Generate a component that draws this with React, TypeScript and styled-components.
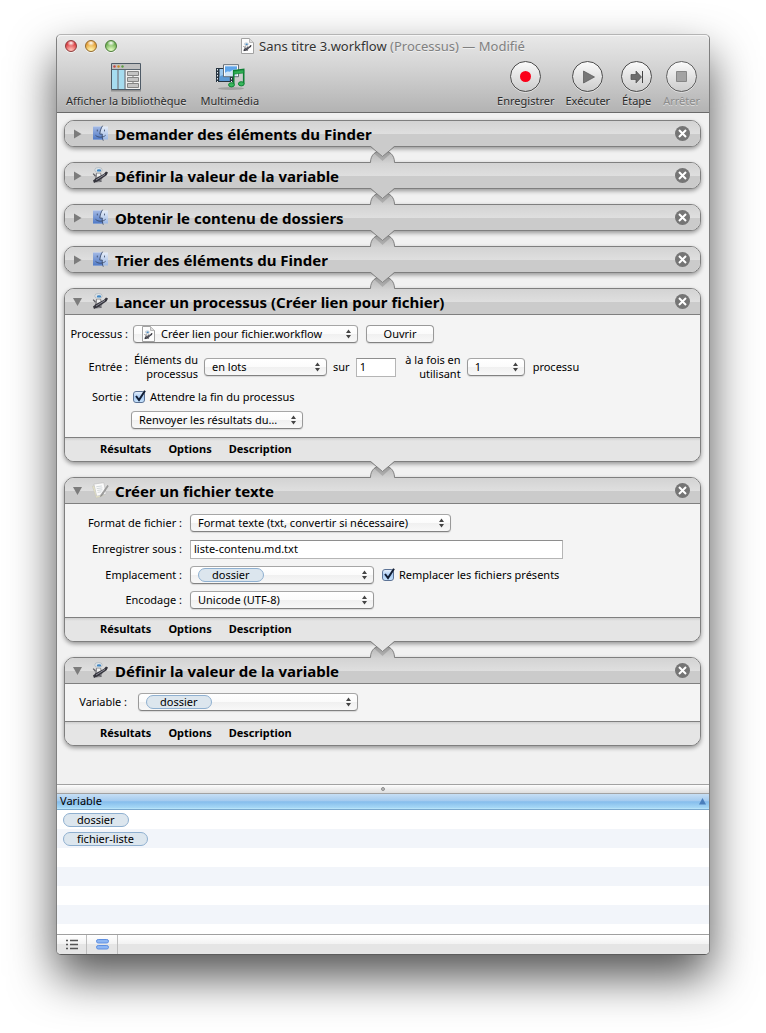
import React, { useId, useState } from "react";
import styled, { createGlobalStyle, css } from "styled-components";

const GlobalStyle = createGlobalStyle`
  * { box-sizing: border-box; }
  body {
    margin: 0;
    background: #fff;
    color: #000;
    font-family: "Noto Sans", "Open Sans", sans-serif;
    font-size: 11px;
    line-height: 14px;
  }
  button, input, select { font: inherit; color: inherit; margin: 0; }
`;

/* ---------- window ---------- */

const Window = styled.main`
  margin: 34px 56px 78px;
  border: 1px solid #808080;
  border-top-color: #b4b4b4;
  border-bottom-color: #5c5c5c;
  border-radius: 5px;
  background: #f1f1f1;
  box-shadow: 0 22px 46px rgba(0, 0, 0, 0.68);
`;

const Header = styled.header`
  border-bottom: 1px solid #6a6a6a;
  border-radius: 5px 5px 0 0;
  background: linear-gradient(#e9e9e9, #d2d2d2 45%, #b3b3b3);
  box-shadow: inset 0 1px #f6f6f6;
  text-shadow: 0 1px rgba(255, 255, 255, 0.5);
`;

const TitleBar = styled.div`
  display: grid;
  grid-template-columns: 1fr auto 1fr;
  align-items: center;
  height: 22px;
  padding: 0 8px;
`;

const Lights = styled.div`
  display: flex;
  gap: 8px;
`;

const Light = styled.button<{ $tone: string; $glow: string; $rim: string }>`
  width: 12px;
  height: 12px;
  padding: 0;
  border: 1px solid ${(p) => p.$rim};
  border-radius: 50%;
  background: radial-gradient(ellipse 4px 3px at 50% 20%, #fff, transparent),
    radial-gradient(circle at 50% 95%, ${(p) => p.$glow} 10%, ${(p) => p.$tone} 75%);
  box-shadow: 0 1px rgba(255, 255, 255, 0.6);
`;

const Title = styled.h1`
  display: flex;
  align-items: center;
  gap: 5px;
  margin: 0;
  font-size: 13px;
  font-weight: 400;
  line-height: 18px;
  color: #333;
  white-space: nowrap;
`;

const TitleNote = styled.span`
  color: #808080;
`;

const Toolbar = styled.div`
  display: flex;
  justify-content: space-between;
  padding: 4px 9px 5px;
`;

const ToolGroup = styled.div<{ $gap: number }>`
  display: flex;
  gap: ${(p) => p.$gap}px;
`;

const Tool = styled.button`
  display: flex;
  flex-direction: column;
  align-items: center;
  gap: 1px;
  padding: 0;
  border: 0;
  background: none;
  color: #2b2b2b;
  text-shadow: inherit;
  line-height: 13px;
  &:disabled { color: #8c8c8c; }
`;

const ToolIcon = styled.span`
  display: flex;
  align-items: center;
  justify-content: center;
  height: 32px;
`;

/* ---------- workflow ---------- */

const Workflow = styled.section`
  padding: 7px 8px 38px 7px;
`;

const Card = styled.article`
  border: 1px solid #7f7f7f;
  border-radius: 10px;
  background: #f4f4f4;
  box-shadow: 0 2px 4px rgba(0, 0, 0, 0.38);
`;

const CardHeader = styled.div<{ $open: boolean }>`
  display: flex;
  align-items: center;
  height: 25px;
  padding: 0 10px 0 8px;
  border-radius: 9px;
  background: linear-gradient(#d3d3d3, #dfdfdf 13px, #cbcbcb 13px, #cbcbcb);
  ${(p) =>
    p.$open &&
    css`
      height: 26px;
      border-bottom: 1px solid #7f7f7f;
      border-radius: 9px 9px 0 0;
    `}
`;

const PlainButton = styled.button`
  display: flex;
  padding: 0;
  border: 0;
  background: none;
`;

const CardIcon = styled.span`
  display: flex;
  margin: 0 6px 0 9px;
`;

const CardTitle = styled.h2`
  flex: 1;
  margin: 0;
  font-size: 15px;
  font-weight: 700;
  line-height: 20px;
`;

const CardBody = styled.div<{ $label: number; $foot: number }>`
  --label: ${(p) => p.$label}px;
  padding: 6px 4px ${(p) => p.$foot}px 0;
`;

const Row = styled.div<{ $h: number }>`
  display: flex;
  align-items: center;
  min-height: ${(p) => p.$h}px;
`;

const Label = styled.label`
  flex: none;
  width: var(--label);
  text-align: right;
  white-space: nowrap;
`;

const Fields = styled.div<{ $indent?: number }>`
  display: flex;
  align-items: center;
  margin-left: ${(p) => p.$indent ?? 8}px;
`;

const SideLabel = styled.label`
  width: 65px;
  margin-right: 6px;
  text-align: right;
`;

const Word = styled.span`
  margin: 0 6px;
`;

const Tail = styled.span`
  margin-left: 8px;
`;

const CardFooter = styled.nav`
  display: flex;
  gap: 17px;
  height: 24px;
  padding: 0 0 2px 35px;
  border-top: 1px solid #7f7f7f;
  border-radius: 0 0 9px 9px;
  background: linear-gradient(#cfcfcf, #e5e5e5 3px);
`;

const FooterButton = styled.button`
  padding: 0;
  border: 0;
  background: none;
  font-weight: 700;
`;

const Link = styled.svg`
  position: relative;
  z-index: 1;
  display: block;
  margin: -1px auto;
`;

/* ---------- controls ---------- */

const SelectBox = styled.span<{ $w: number }>`
  position: relative;
  display: inline-flex;
  flex: none;
  width: ${(p) => p.$w}px;
  height: 18px;
  border: 1px solid #999;
  border-top-color: #a6a6a6;
  border-bottom-color: #828282;
  border-radius: 4px;
  background: linear-gradient(#fff, #fbfbfb 50%, #f0f0f0 50%, #f8f8f8);
  box-shadow: 0 1px 1px rgba(0, 0, 0, 0.12);
`;

const NativeSelect = styled.select<{ $pad: number }>`
  position: relative;
  width: 100%;
  height: 16px;
  padding: 0 16px 0 ${(p) => p.$pad}px;
  border: 0;
  background: none;
  appearance: none;
  line-height: 16px;
  white-space: nowrap;
`;

const Arrows = styled.svg`
  position: absolute;
  top: 3px;
  right: 6px;
  pointer-events: none;
`;

const SelectIcon = styled.span`
  position: absolute;
  top: 0;
  left: 8px;
  display: flex;
`;

const pill = css`
  border: 1px solid #8fb0d0;
  border-radius: 7px;
  background: #dce6ee;
`;

const PillBack = styled.span`
  ${pill}
  position: absolute;
  top: 1px;
  left: 7px;
  width: 66px;
  height: 14px;
`;

const Pill = styled.span`
  ${pill}
  display: inline-block;
  height: 14px;
  padding: 0 13px;
  line-height: 12px;
`;

const PushButton = styled.button`
  width: 68px;
  height: 18px;
  margin-left: 8px;
  padding: 0;
  border: 1px solid #999;
  border-bottom-color: #828282;
  border-radius: 4px;
  background: linear-gradient(#fff, #fbfbfb 50%, #f0f0f0 50%, #f8f8f8);
  box-shadow: 0 1px 1px rgba(0, 0, 0, 0.12);
  line-height: 16px;
`;

const TextInput = styled.input<{ $w: number }>`
  width: ${(p) => p.$w}px;
  height: 19px;
  padding: 0 3px 2px;
  border: 1px solid #b5b5b5;
  border-top-color: #8e8e8e;
  border-radius: 0;
  background: #fff;
`;

const CheckLabel = styled.label`
  display: flex;
  align-items: center;
  gap: 4px;
  white-space: nowrap;
`;

const CheckWrap = styled.span`
  position: relative;
  display: flex;
  width: 13px;
  height: 14px;
`;

const CheckInput = styled.input`
  width: 12px;
  height: 12px;
  margin-top: 1px;
  border: 1px solid #5c7396;
  border-radius: 3px;
  appearance: none;
  background: linear-gradient(#e4eefb, #a9cbf3 50%, #c6e2fc);
`;

const CheckMark = styled.svg`
  position: absolute;
  top: 0;
  left: 0;
  pointer-events: none;
`;

/* ---------- variables panel ---------- */

const Splitter = styled.div`
  display: flex;
  align-items: center;
  justify-content: center;
  height: 10px;
  border: solid #a2a2a2;
  border-width: 1px 0;
  background: linear-gradient(#fdfdfd, #dedede);
`;

const Dimple = styled.span`
  width: 4px;
  height: 4px;
  border: 1px solid #8e8e8e;
  border-radius: 50%;
  background: #bdbdbd;
`;

const VariableList = styled.section`
  min-height: 140px;
  background: repeating-linear-gradient(#fff 0 19px, #f2f5fa 19px 38px) 0 16px;
`;

const VariableTable = styled.table`
  width: 100%;
  border-collapse: separate;
  border-spacing: 0;
`;

const HeadCell = styled.th`
  height: 16px;
  padding: 0 3px 1px;
  border-bottom: 1px solid #7ba9cd;
  background: linear-gradient(#c6def4, #a4cbef 45%, #86bdec 52%, #a6d8f6 92%, #c2eafb);
  font-weight: 400;
  line-height: 14px;
  text-align: left;
`;

const HeadInner = styled.div`
  display: flex;
  align-items: center;
  justify-content: space-between;
`;

const Cell = styled.td`
  height: 19px;
  padding: 0 6px;
  line-height: 0;
  vertical-align: middle;
`;

const BottomBar = styled.footer`
  display: flex;
  height: 20px;
  border-top: 1px solid #a0a0a0;
  border-radius: 0 0 4px 4px;
  background: linear-gradient(#fff, #f2f2f2 50%, #e5e5e5 50%);
`;

const ModeButton = styled.button<{ $w: number }>`
  display: flex;
  align-items: center;
  justify-content: center;
  width: ${(p) => p.$w}px;
  padding: 0;
  border: 0;
  border-right: 1px solid #bdbdbd;
  background: none;
`;

/* ---------- drawings ---------- */

const RobotShape = () => (
  <>
    <ellipse cx="6.5" cy="3" rx="3.8" ry="2.5" fill="#dfe4e8" stroke="#a9b1b8" strokeWidth=".7" />
    <ellipse cx="7" cy="3.4" rx="2.2" ry="1.2" fill="#3f86c4" />
    <path d="M4 6h5l1.5 5L9 15l-5 .5L3 10z" fill="#8b8b8f" />
    <path d="M5 6.6h3.2L8.6 9 5 10z" fill="#f0f0f0" />
    <path d="M1.2 6.6l2.2 2.600M3 11.5l6.5 3" stroke="#5c5c62" strokeWidth="1.3" fill="none" />
    <path d="M1 13.6l2.6-2.2L12 6.8l2-2.200 2 1-1.400 2.600-9.200 6.400L2 16z" fill="#34343c" />
    <path d="M4 13l9-5.600" stroke="#a3a3b0" strokeWidth=".8" />
  </>
);

const RobotIcon = () => (
  <svg width="17" height="17" viewBox="0 0 17 17" aria-hidden="true">
    <RobotShape />
  </svg>
);

const FinderIcon = () => {
  const id = useId();
  return (
    <svg width="17" height="17" viewBox="0 0 17 17" aria-hidden="true">
      <defs>
        <linearGradient id={id} x2="0" y2="1">
          <stop offset="0" stopColor="#a3b9e4" />
          <stop offset="1" stopColor="#4f79c6" />
        </linearGradient>
        <linearGradient id={id + "r"} x2="0" y2="1">
          <stop offset="0" stopColor="#e6edf8" />
          <stop offset="1" stopColor="#9db9e6" />
        </linearGradient>
      </defs>
      <path d="M1 1.500h15v13H1z" fill={`url(#${id}r)`} />
      <path d="M1 1.500h9.400C8.800 4 8.200 6.400 8 9h2.400c-.2 2 0 3.800.5 5.500H1z" fill={`url(#${id})`} />
      <path d="M10.600.7C8.800 3.500 8 6.200 7.800 9.100h2.500c-.2 2.400.1 4.800 1 6.600" fill="none" stroke="#33425f" strokeWidth=".8" />
      <path d="M3.500 10.300c2.600 2.600 7.600 2.500 10.200-.1" fill="none" stroke="#33425f" strokeWidth=".8" />
      <path d="M5.300 4.600v1.800M12.500 4.600v1.800" stroke="#33425f" strokeWidth=".8" />
    </svg>
  );
};

const TextPadIcon = () => (
  <svg width="17" height="17" viewBox="0 0 18 18" aria-hidden="true">
    <path d="M.5 4.500L9 3l4 11-8.500 3z" fill="#ece8c4" stroke="#c7c7c0" strokeWidth=".7" />
    <path d="M2 2.200l10.500-1.500L15 12.500 5 15z" fill="#fafafa" stroke="#bdbdbd" strokeWidth=".7" />
    <path d="M4.500 5l6-.8M5 7l6-.8M5.500 9l5.500-.8M6 11l4-.6" stroke="#c6ccd0" strokeWidth=".8" />
    <path d="M16.500 3.500l.8.8L11 14l-2 1.400.6-2.200z" fill="#a2a2a2" stroke="#7b7b7b" strokeWidth=".5" />
  </svg>
);

const WorkflowDocIcon = () => (
  <svg width="13" height="16" viewBox="0 0 13 16" aria-hidden="true">
    <path d="M.5.5h8l4 4v11H.5z" fill="#fcfcfc" stroke="#a2a2a2" />
    <path d="M8.500.5v4h4" fill="#ddd" stroke="#a8a8a8" strokeWidth=".8" />
    <g transform="translate(1.800 4.400) scale(.55)">
      <RobotShape />
    </g>
  </svg>
);

const LibraryIcon = () => (
  <svg width="30" height="29" viewBox="0 0 30 29" aria-hidden="true">
    <path d="M0 27.500h30" stroke="#000" strokeOpacity=".25" strokeWidth="2" />
    <path d="M.5.5h29v26H.5z" fill="#f1f1f1" stroke="#4e5a66" />
    <path d="M1 1h28v5H1z" fill="#c0c0c0" />
    <circle cx="3.500" cy="3.500" r="1.200" fill="#c8453f" />
    <circle cx="7.500" cy="3.500" r="1.200" fill="#c98c26" />
    <circle cx="11.500" cy="3.500" r="1.200" fill="#5d9e43" />
    <path d="M1 6.500h28" stroke="#5b6670" />
    <path d="M1 7h5.500v19H1zM7.500 7h6v19h-6z" fill="#a6dcf0" />
    <path d="M7 7v19M14 7v19" stroke="#44586a" />
    <path d="M22 8v17" stroke="#777" />
    <g fill="#c4c4c4" stroke="#858585">
      <path d="M16.500 8.500h11v4h-11zM16.500 14.500h11v4h-11zM16.500 20.500h11v4h-11z" />
    </g>
  </svg>
);

const MediaIcon = () => (
  <svg width="30" height="27" viewBox="0 0 30 27" aria-hidden="true">
    <ellipse cx="16" cy="24.500" rx="13" ry="1.500" fill="#000" opacity=".18" />
    <path d="M1 4h17v14H1z" fill="#26333f" />
    <path d="M4.500 5h10v12h-10z" fill="#9cc8ee" />
    <path d="M4.500 13c3-3 6-1 10-2v6h-10z" fill="#5b9ad6" />
    <path d="M2.500 5v13M16.500 5v13" stroke="#e8eef2" strokeWidth="1" strokeDasharray="1.500 1.500" />
    <path d="M8.500.7h15v12h-15z" fill="#fff" stroke="#56616b" strokeWidth=".9" />
    <path d="M10 2.300h12v9H10z" fill="#5fa5ea" />
    <path d="M10 9c3-3 4 0 6-2s4-1 6-2v6.300H10z" fill="#cfe5f8" />
    <path d="M18.700 20.500V6.700l10-1.200v14" fill="none" stroke="#0e7f33" strokeWidth="1.600" />
    <path d="M18.700 7.200l10-1.200v3l-10 1.200z" fill="#2fae52" stroke="#0e7f33" strokeWidth=".6" />
    <ellipse cx="16.500" cy="20.800" rx="2.900" ry="2.100" fill="#38b85c" stroke="#0e7f33" />
    <ellipse cx="26.300" cy="19.800" rx="2.900" ry="2.100" fill="#38b85c" stroke="#0e7f33" />
  </svg>
);

const RoundIcon = ({ faded, children }: { faded?: boolean; children: React.ReactNode }) => {
  const id = useId();
  return (
    <svg width="31" height="32" viewBox="0 0 31 32" aria-hidden="true">
      <defs>
        <linearGradient id={id} x2="0" y2="1">
          <stop offset="0" stopColor="#fbfbfb" />
          <stop offset=".5" stopColor="#e3e3e3" />
          <stop offset="1" stopColor="#cccccc" />
        </linearGradient>
      </defs>
      <circle cx="15.500" cy="16.500" r="15" fill="none" stroke="#fff" strokeOpacity=".5" />
      <circle cx="15.500" cy="15.500" r="15" fill={`url(#${id})`} stroke={faded ? "#5e5e5e" : "#4a4a4a"} />
      {children}
    </svg>
  );
};

const RemoveIcon = () => (
  <svg width="15" height="15" viewBox="0 0 15 15" aria-hidden="true">
    <circle cx="7.500" cy="7.500" r="7.500" fill="#757575" />
    <path d="M4 4l7 7M11 4l-7 7" stroke="#fff" strokeWidth="2" />
  </svg>
);

const Disclosure = ({ open }: { open: boolean }) => (
  <svg width="10" height="11" viewBox="0 0 10 11" aria-hidden="true">
    <path d={open ? "M0 2h9L4.500 10z" : "M1 1.500l7.500 4.500L1 10.500z"} fill="#7c7c7c" />
  </svg>
);

const Connector = ({ tip }: { tip: string }) => {
  const id = useId();
  return (
    <Link width="27" height="17" viewBox="0 0 27 17" aria-hidden="true">
      <defs>
        <linearGradient id={id} x2="0" y2="1">
          <stop offset="0" stopColor="#b2b2b2" />
          <stop offset="1" stopColor="#d2d2d2" />
        </linearGradient>
        <clipPath id={id + "c"}>
          <path d="M1.500 17C1.500 8.500 7 4.500 13.500 4.500S25.500 8.500 25.500 17z" />
        </clipPath>
      </defs>
      <path d="M1.500 17C1.500 8.500 7 4.500 13.500 4.500S25.500 8.500 25.500 17z" fill={`url(#${id})`} />
      <path d="M1.500 16.500C1.500 8.500 7 4.500 13.500 4.500S25.500 8.500 25.500 16.500" fill="none" stroke="#7f7f7f" />
      <g clipPath={`url(#${id}c)`}>
        <path d="M2 2.500L13.500 13 25 2.500" fill="none" stroke="#000" strokeOpacity=".14" strokeWidth="3" />
      </g>
      <path d="M1.500 0L13.500 10.500 25.500 0z" fill={tip} />
      <path d="M1.500.5l12 10 12-10" fill="none" stroke="#7f7f7f" />
    </Link>
  );
};

/* ---------- pieces ---------- */

type SelectProps = {
  id: string;
  width: number;
  value: string;
  label?: string;
  icon?: boolean;
  token?: boolean;
};

const Select = ({ id, width, value, label, icon, token }: SelectProps) => (
  <SelectBox $w={width}>
    {token && <PillBack />}
    {icon && (
      <SelectIcon>
        <WorkflowDocIcon />
      </SelectIcon>
    )}
    <NativeSelect id={id} aria-label={label} $pad={icon ? 27 : token ? 21 : 7}>
      <option>{value}</option>
    </NativeSelect>
    <Arrows width="5" height="10" viewBox="0 0 5 10" aria-hidden="true">
      <path d="M0 4L2.500.5 5 4zM0 6h5L2.500 9.500z" fill="#444" />
    </Arrows>
  </SelectBox>
);

const Check = ({ children }: { children: string }) => {
  const [on, setOn] = useState(true);
  return (
    <CheckLabel>
      <CheckWrap>
        <CheckInput type="checkbox" checked={on} onChange={() => setOn(!on)} />
        {on && (
          <CheckMark width="13" height="13" viewBox="0 0 13 13" aria-hidden="true">
            <path d="M3 6l3 4L12 .8" fill="none" stroke="#111d33" strokeWidth="2" />
          </CheckMark>
        )}
      </CheckWrap>
      {children}
    </CheckLabel>
  );
};

type ActionProps = {
  title: string;
  icon: React.ReactNode;
  labelWidth?: number;
  foot?: number;
  children?: React.ReactNode;
};

const Action = ({ title, icon, labelWidth = 0, foot = 5, children }: ActionProps) => {
  const open = Boolean(children);
  return (
    <Card>
      <CardHeader $open={open}>
        <PlainButton aria-label="Afficher les détails" aria-expanded={open}>
          <Disclosure open={open} />
        </PlainButton>
        <CardIcon>{icon}</CardIcon>
        <CardTitle>{title}</CardTitle>
        <PlainButton aria-label="Supprimer">
          <RemoveIcon />
        </PlainButton>
      </CardHeader>
      {open && (
        <>
          <CardBody $label={labelWidth} $foot={foot}>{children}</CardBody>
          <CardFooter>
            <FooterButton>Résultats</FooterButton>
            <FooterButton>Options</FooterButton>
            <FooterButton>Description</FooterButton>
          </CardFooter>
        </>
      )}
    </Card>
  );
};

const CLOSED = "#cbcbcb";
const OPEN = "#e5e5e5";

export default function App() {
  return (
    <>
      <GlobalStyle />
      <Window>
        <Header>
          <TitleBar>
            <Lights>
              <Light aria-label="Fermer" $tone="#d8343a" $glow="#ffb8b0" $rim="#8e3b3b" />
              <Light aria-label="Réduire" $tone="#e39a2f" $glow="#fff0a6" $rim="#93692c" />
              <Light aria-label="Agrandir" $tone="#67ab4b" $glow="#dcf8bc" $rim="#4c7c3a" />
            </Lights>
            <Title>
              <WorkflowDocIcon />
              <span>
                Sans titre 3.workflow <TitleNote>(Processus) — Modifié</TitleNote>
              </span>
            </Title>
          </TitleBar>
          <Toolbar>
            <ToolGroup $gap={14}>
              <Tool>
                <ToolIcon><LibraryIcon /></ToolIcon>
                Afficher la bibliothèque
              </Tool>
              <Tool>
                <ToolIcon><MediaIcon /></ToolIcon>
                Multimédia
              </Tool>
            </ToolGroup>
            <ToolGroup $gap={11}>
              <Tool>
                <ToolIcon>
                  <RoundIcon><circle cx="15.500" cy="15.500" r="5.500" fill="#fb0019" /></RoundIcon>
                </ToolIcon>
                Enregistrer
              </Tool>
              <Tool>
                <ToolIcon>
                  <RoundIcon><path d="M11.500 10l11 6-11 6z" fill="#777" stroke="#555" strokeWidth=".7" /></RoundIcon>
                </ToolIcon>
                Exécuter
              </Tool>
              <Tool>
                <ToolIcon>
                  <RoundIcon>
                    <path d="M10 13.500h5v-3.500l5.500 6-5.500 6v-3.500h-5z" fill="#6d6d6d" stroke="#4f4f4f" strokeWidth=".7" />
                    <path d="M21.500 10v12" stroke="#444" />
                  </RoundIcon>
                </ToolIcon>
                Étape
              </Tool>
              <Tool disabled>
                <ToolIcon>
                  <RoundIcon faded>
                    <path d="M10.500 10.500h10v10h-10z" fill="#a3a3a3" stroke="#868686" />
                  </RoundIcon>
                </ToolIcon>
                Arrêter
              </Tool>
            </ToolGroup>
          </Toolbar>
        </Header>

        <Workflow>
          <Action title="Demander des éléments du Finder" icon={<FinderIcon />} />
          <Connector tip={CLOSED} />
          <Action title="Définir la valeur de la variable" icon={<RobotIcon />} />
          <Connector tip={CLOSED} />
          <Action title="Obtenir le contenu de dossiers" icon={<FinderIcon />} />
          <Connector tip={CLOSED} />
          <Action title="Trier des éléments du Finder" icon={<FinderIcon />} />
          <Connector tip={CLOSED} />
          <Action title="Lancer un processus (Créer lien pour fichier)" icon={<RobotIcon />} labelWidth={63}>
            <Row $h={26}>
              <Label htmlFor="process">Processus :</Label>
              <Fields $indent={5}>
                <Select id="process" width={225} value="Créer lien pour fichier.workflow" icon />
                <PushButton>Ouvrir</PushButton>
              </Fields>
            </Row>
            <Row $h={40}>
              <Label as="span">Entrée :</Label>
              <Fields $indent={5}>
                <SideLabel htmlFor="batch">Éléments du processus</SideLabel>
                <Select id="batch" width={123} value="en lots" />
                <Word>sur</Word>
                <TextInput aria-label="Nombre d'éléments" defaultValue="1" $w={40} />
                <SideLabel htmlFor="parallel">à la fois en utilisant</SideLabel>
                <Select id="parallel" width={58} value="1" />
                <Tail>processu</Tail>
              </Fields>
            </Row>
            <Row $h={20}>
              <Label as="span">Sortie :</Label>
              <Fields $indent={5}>
                <Check>Attendre la fin du processus</Check>
              </Fields>
            </Row>
            <Row $h={25}>
              <Label as="span" />
              <Fields $indent={3}>
                <Select id="results" label="Résultats du processus" width={172} value="Renvoyer les résultats du…" />
              </Fields>
            </Row>
          </Action>
          <Connector tip={OPEN} />
          <Action title="Créer un fichier texte" icon={<TextPadIcon />} labelWidth={117}>
            <Row $h={26}>
              <Label htmlFor="format">Format de fichier :</Label>
              <Fields>
                <Select id="format" width={261} value="Format texte (txt, convertir si nécessaire)" />
              </Fields>
            </Row>
            <Row $h={26}>
              <Label htmlFor="saveas">Enregistrer sous :</Label>
              <Fields>
                <TextInput id="saveas" defaultValue="liste-contenu.md.txt" $w={373} />
              </Fields>
            </Row>
            <Row $h={26}>
              <Label htmlFor="place">Emplacement :</Label>
              <Fields>
                <Select id="place" width={184} value="dossier" token />
                <Tail>
                  <Check>Remplacer les fichiers présents</Check>
                </Tail>
              </Fields>
            </Row>
            <Row $h={24}>
              <Label htmlFor="encoding">Encodage :</Label>
              <Fields>
                <Select id="encoding" width={184} value="Unicode (UTF-8)" />
              </Fields>
            </Row>
          </Action>
          <Connector tip={OPEN} />
          <Action title="Définir la valeur de la variable" icon={<RobotIcon />} labelWidth={62} foot={7}>
            <Row $h={24}>
              <Label htmlFor="variable">Variable :</Label>
              <Fields $indent={11}>
                <Select id="variable" width={220} value="dossier" token />
              </Fields>
            </Row>
          </Action>
        </Workflow>

        <Splitter>
          <Dimple />
        </Splitter>
        <VariableList>
          <VariableTable>
            <thead>
              <tr>
                <HeadCell scope="col">
                  <HeadInner>
                    Variable
                    <svg width="7" height="7" viewBox="0 0 7 7" aria-hidden="true">
                      <path d="M0 6.500L3.500 0 7 6.500z" fill="#4a7ebb" />
                    </svg>
                  </HeadInner>
                </HeadCell>
              </tr>
            </thead>
            <tbody>
              <tr>
                <Cell><Pill>dossier</Pill></Cell>
              </tr>
              <tr>
                <Cell><Pill>fichier-liste</Pill></Cell>
              </tr>
            </tbody>
          </VariableTable>
        </VariableList>
        <BottomBar>
          <ModeButton $w={30} aria-label="Historique">
            <svg width="12" height="11" viewBox="0 0 12 11" aria-hidden="true">
              <path d="M0 1.500h2M0 5.500h2M0 9.500h2M4 1.500h8M4 5.500h8M4 9.500h8" stroke="#555" strokeWidth="1.500" />
            </svg>
          </ModeButton>
          <ModeButton $w={31} aria-label="Variables">
            <svg width="13" height="11" viewBox="0 0 13 11" aria-hidden="true">
              <rect x=".5" y=".5" width="12" height="3.500" rx="1.700" fill="#8db6f3" stroke="#5f8fe0" />
              <rect x=".5" y="6.500" width="12" height="3.500" rx="1.700" fill="#8db6f3" stroke="#5f8fe0" />
            </svg>
          </ModeButton>
        </BottomBar>
      </Window>
    </>
  );
}
